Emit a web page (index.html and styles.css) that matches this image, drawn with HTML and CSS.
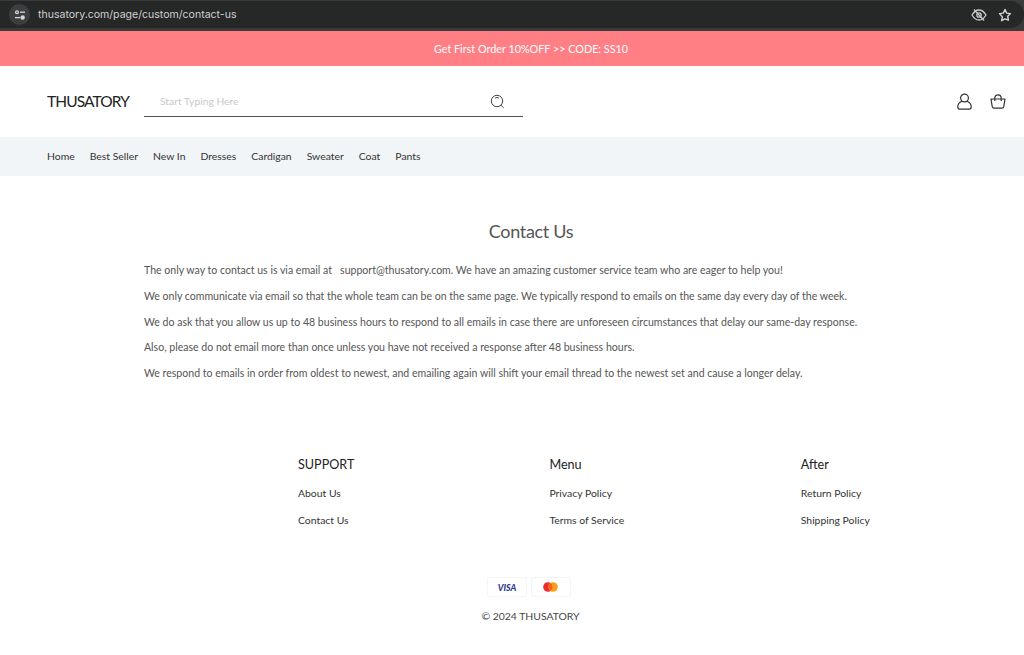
FILE: index.html
```html
<!DOCTYPE html>
<html lang="en">
<head>
<meta charset="utf-8">
<title>Contact Us - THUSATORY</title>
<link rel="stylesheet" href="styles.css">
</head>
<body>
<div class="chrome">
  <div class="urlbar">
    <span class="tune">
      <svg width="12" height="10" viewBox="0 0 12 10" fill="none" stroke="#d8d8d8" stroke-width="1.3"><circle cx="3" cy="2.2" r="1.4"/><path d="M6 2.2h5"/><circle cx="8.6" cy="7.6" r="1.6" fill="#d8d8d8"/><path d="M1 7.6h5"/></svg>
    </span>
    <span class="url">thusatory.com/page/custom/contact-us</span>
    <span class="chrome-icons">
      <svg width="16" height="14" viewBox="0 0 16 14" fill="none" stroke="#c9c9c9" stroke-width="1.3"><path d="M1 7c2-3.4 4.400-5 7-5s5 1.600 7 5c-2 3.400-4.400 5-7 5s-5-1.600-7-5z"/><circle cx="8" cy="7" r="2.200"/><path d="M3 1.500l10 11"/></svg>
      <svg width="14" height="14" viewBox="0 0 14 14" fill="none" stroke="#d4d4d4" stroke-width="1.400" stroke-linejoin="round"><path d="M7 1.500l1.700 3.600 3.800.5-2.800 2.700.7 3.900L7 10.800l-3.400 1.900.7-3.900L1.500 5.600l3.800-.5z"/></svg>
    </span>
  </div>
</div>
<div class="banner">Get First Order 10%OFF &gt;&gt; CODE: SS10</div>
<header class="header">
  <a class="logo">THUSATORY</a>
  <div class="search">
    <span class="placeholder">Start Typing Here</span>
    <svg width="15" height="15" viewBox="0 0 15 15" fill="none" stroke="#444" stroke-width="1"><circle cx="7" cy="7" r="5.700"/><path d="M10.800 11l2.800 2.800"/><path d="M5 4.200a3.400 3.400 0 0 1 4 0"/></svg>
  </div>
  <div class="header-icons">
    <svg width="15" height="17" viewBox="0 0 15 17" fill="none" stroke="#333" stroke-width="1.200"><circle cx="7.500" cy="5" r="3.900"/><path d="M5 8.200c-2.400 1-4.200 3-4.200 5.300 0 1.300.6 2.700 1.700 2.700h10c1.100 0 1.700-1.400 1.700-2.700 0-2.300-1.800-4.300-4.200-5.300"/></svg>
    <svg width="16" height="15" viewBox="0 0 16 15" fill="none" stroke="#333" stroke-width="1.200" stroke-linejoin="round"><path d="M1 5h14l-1.200 7.400c-.2 1-.9 1.800-1.800 1.800H4c-.9 0-1.600-.8-1.800-1.800z"/><path d="M4.800 7V4C4.800 2.200 6.200.8 8 .8s3.200 1.400 3.200 3.200v3"/></svg>
  </div>
</header>
<nav class="nav">
  <a>Home</a><a>Best Seller</a><a>New In</a><a>Dresses</a><a>Cardigan</a><a>Sweater</a><a>Coat</a><a>Pants</a>
</nav>
<main class="content">
  <h1>Contact Us</h1>
  <p>The only way to contact us is via email at &nbsp; support@thusatory.com. We have an amazing customer service team who are eager to help you!</p>
  <p>We only communicate via email so that the whole team can be on the same page. We typically respond to emails on the same day every day of the week.</p>
  <p>We do ask that you allow us up to 48 business hours to respond to all emails in case there are unforeseen circumstances that delay our same-day response.</p>
  <p>Also, please do not email more than once unless you have not received a response after 48 business hours.</p>
  <p>We respond to emails in order from oldest to newest, and emailing again will shift your email thread to the newest set and cause a longer delay.</p>
</main>
<footer class="footer">
  <div class="columns">
    <div class="col"><h3>SUPPORT</h3><a>About Us</a><a>Contact Us</a></div>
    <div class="col"><h3>Menu</h3><a>Privacy Policy</a><a>Terms of Service</a></div>
    <div class="col"><h3>After</h3><a>Return Policy</a><a>Shipping Policy</a></div>
  </div>
  <div class="pay">
    <span class="card"><span class="visa">VISA</span></span>
    <span class="card"><svg width="15" height="10" viewBox="0 0 15 10"><circle cx="5" cy="5" r="4.800" fill="#eb2d2d"/><circle cx="10" cy="5" r="4.800" fill="#f9a01b"/><path d="M7.500 1a4.800 4.800 0 0 1 0 8 4.800 4.800 0 0 1 0-8z" fill="#f4621f"/></svg></span>
  </div>
  <div class="copy">© 2024 THUSATORY</div>
</footer>
</body>
</html>
```
FILE: styles.css
```css
* { box-sizing: border-box; }
html, body { margin: 0; padding: 0; }
body {
  width: 1024px;
  height: 655px;
  overflow: hidden;
  background: #fff;
  font-family: "Lato", "Liberation Sans", sans-serif;
  color: #333;
}
.chrome {
  height: 31px;
  background: #3a3a3a;
  padding: 1px 0 3px;
}
.urlbar {
  height: 27px;
  background: #262727;
  border-radius: 0 14px 14px 0;
  display: flex;
  align-items: center;
  padding-left: 9px;
  padding-right: 12px;
}
.tune {
  width: 21px;
  height: 21px;
  border-radius: 50%;
  background: #3d3e3f;
  display: flex;
  align-items: center;
  justify-content: center;
}
.url {
  margin-left: 8px;
  font-family: "Inter", sans-serif;
  font-size: 10.550px;
  color: #d0d0d0;
}
.chrome-icons {
  margin-left: auto;
  display: flex;
  align-items: center;
  gap: 11px;
}
.banner {
  height: 35px;
  background: #ff7f85;
  color: #fff;
  font-size: 10.800px;
  display: flex;
  align-items: center;
  justify-content: center;
  padding-left: 38px;
}
.header {
  height: 71px;
  display: flex;
  align-items: center;
  padding: 0 18px 0 47px;
}
.logo {
  width: 97px;
  padding-bottom: 2px;
  font-size: 15.500px;
  color: #222;
  letter-spacing: -0.9px;
}
.search {
  width: 379px;
  height: 31px;
  border-bottom: 1px solid #555;
  display: flex;
  align-items: center;
  justify-content: space-between;
  padding: 0 18px 0 16px;
}
.placeholder {
  font-size: 10.300px;
  color: #c8c8c8;
}
.header-icons {
  margin-left: auto;
  display: flex;
  align-items: center;
  gap: 18px;
}
.nav {
  height: 39px;
  background: #f1f5f7;
  display: flex;
  align-items: center;
  gap: 15px;
  padding: 0 0 1px 47px;
  font-size: 10.400px;
  color: #333;
}
.content {
  padding: 44px 144px 0;
  height: 279px;
}
.content h1 {
  margin: 0 0 19px;
  text-align: center;
  font-size: 18px;
  letter-spacing: -0.3px;
  font-weight: 400;
  color: #555;
  line-height: 23px;
  padding-left: 38px;
}
.content p {
  margin: 0 0 8.800px;
  font-size: 10.550px;
  line-height: 17px;
  color: #555;
  white-space: nowrap;
}
.footer {
  display: flex;
  flex-direction: column;
  align-items: center;
}
.columns {
  display: flex;
  width: 100%;
  padding-left: 298px;
}
.col {
  flex: 0 0 251.400px;
  display: flex;
  flex-direction: column;
}
.col h3 {
  margin: 0 0 10px;
  font-size: 12.600px;
  font-weight: 400;
  color: #222;
  line-height: 20px;
}
.col a {
  font-size: 10.400px;
  color: #333;
  line-height: 17px;
  margin-bottom: 9.500px;
}
.pay {
  display: flex;
  gap: 4px;
  margin-top: 39px;
  padding-left: 34px;
}
.card {
  width: 40px;
  height: 20px;
  border: 1px solid #f5f5f5;
  border-radius: 2px;
  display: flex;
  align-items: center;
  justify-content: center;
}
.card svg {
  margin-right: 2px;
}
.visa {
  font-size: 8.800px;
  font-weight: 900;
  font-style: italic;
  color: #2b3a8c;
}
.copy {
  margin-top: 11px;
  padding-left: 37px;
  font-size: 10.400px;
  color: #444;
  line-height: 17px;
}
```
